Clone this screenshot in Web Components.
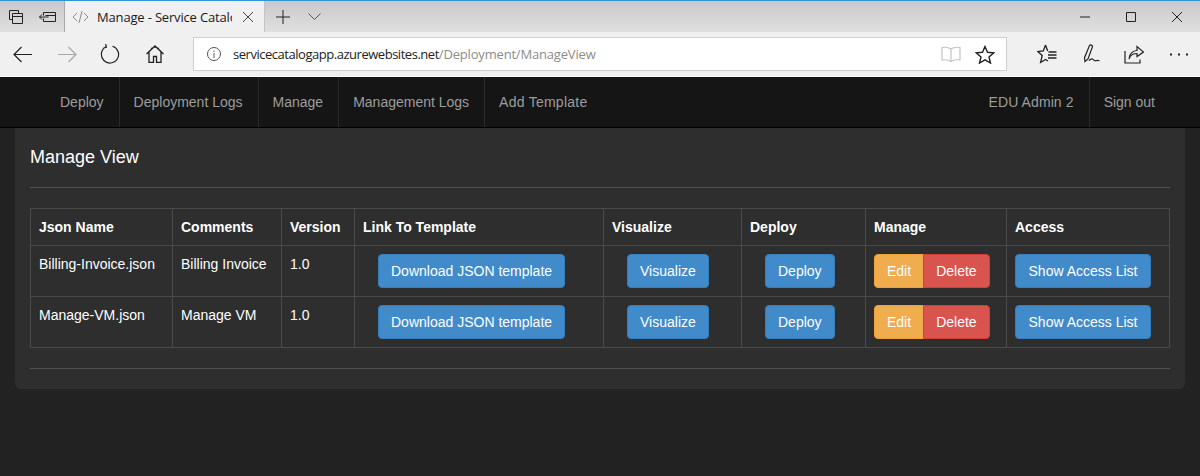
<!DOCTYPE html>
<html>
<head>
<meta charset="utf-8">
<title>Manage - Service Catalog</title>
<style>
  html, body { margin: 0; height: 476px; overflow: hidden; background: #222; }
  body { font-family: "Liberation Sans", Arial, sans-serif; display: flex; flex-direction: column; }
</style>
</head>
<body>
<browser-tabs></browser-tabs>
<browser-toolbar url-host="servicecatalogapp.azurewebsites.net" url-path="/Deployment/ManageView"></browser-toolbar>
<app-nav>
  <nav-item>Deploy</nav-item>
  <nav-item>Deployment Logs</nav-item>
  <nav-item>Manage</nav-item>
  <nav-item>Management Logs</nav-item>
  <nav-item last style="letter-spacing:.25px">Add Template</nav-item>
  <nav-item slot="right" style="letter-spacing:.1px">EDU Admin 2</nav-item>
  <nav-item slot="right" last>Sign out</nav-item>
</app-nav>
<manage-panel heading="Manage View">
  <manage-table></manage-table>
</manage-panel>

<script>
// Browser tab strip
class BrowserTabs extends HTMLElement {
  constructor() {
    super();
    this.attachShadow({ mode: 'open' });
    this.shadowRoot.innerHTML = `
<style>
  :host {
    display: flex;
    height: 32px;
    flex: none;
    box-sizing: border-box;
    border-top: 1px solid #2f93dc;
    background: linear-gradient(#c9c9c9, #e0e0e0);
    color: #1a1a1a;
    font-family: "Open Sans", sans-serif;
    font-size: 13px;
  }
  .cell { display: flex; align-items: center; justify-content: center; flex: none; }
  svg { display: block; fill: none; stroke: #222; stroke-width: 1; }
  .tab {
    width: 201px;
    box-sizing: border-box;
    background: #f0f0f0;
    border-left: 1px solid #a9a9a9;
    border-right: 1px solid #c4c4c4;
    display: flex;
    align-items: center;
    flex: none;
  }
  .title { width: 135px; overflow: hidden; white-space: nowrap; margin-left: 8px; flex: none; letter-spacing: -0.17px; }
  .spacer { flex: 1; }
</style>
<div class="cell" style="width:32px">
  <svg width="16" height="16" viewBox="0 0 16 16"><path d="M1.5 1.5h9v3M1.5 1.5v9h3M4.5 4.5h10v10h-10zM4.5 7.5h10"/></svg>
</div>
<div class="cell" style="width:32px">
  <svg width="18" height="14" viewBox="0 0 18 14"><path d="M4.5 2.5h12v9h-12v-3M4.5 2.5v3M.5 7h9M3 4.5L.5 7 3 9.5M6.5 5.5h10"/></svg>
</div>
<div class="tab">
  <svg style="margin-left:7px;stroke:#8a8a8a" width="17" height="14" viewBox="0 0 17 14"><path d="M5 3L1 7l4 4M12 3l4 4-4 4M10 1L7 13"/></svg>
  <div class="title">Manage - Service Catalog</div>
  <svg style="margin-left:11px;stroke:#444" width="10" height="10" viewBox="0 0 10 10"><path d="M0 0l10 10M10 0L0 10"/></svg>
</div>
<div class="cell" style="width:36px">
  <svg width="14" height="14" viewBox="0 0 14 14"><path d="M7 0v14M0 7h14"/></svg>
</div>
<div class="cell" style="width:26px">
  <svg width="13" height="7" viewBox="0 0 13 7"><path stroke="#555" d="M.5.5l6 6 6-6"/></svg>
</div>
<div class="spacer"></div>
<div class="cell" style="width:46px">
  <svg width="10" height="2" viewBox="0 0 10 2"><path d="M0 1h10"/></svg>
</div>
<div class="cell" style="width:46px">
  <svg width="10" height="10" viewBox="0 0 10 10"><path d="M.5.5h9v9h-9z"/></svg>
</div>
<div class="cell" style="width:46px">
  <svg width="10" height="10" viewBox="0 0 10 10"><path d="M0 0l10 10M10 0L0 10"/></svg>
</div>`;
  }
}
customElements.define('browser-tabs', BrowserTabs);

// Back / forward / address bar row
class BrowserToolbar extends HTMLElement {
  constructor() {
    super();
    this.attachShadow({ mode: 'open' });
    this.shadowRoot.innerHTML = `
<style>
  :host {
    display: flex;
    height: 45px;
    flex: none;
    align-items: flex-start;
    padding-top: 5px;
    box-sizing: border-box;
    background: #f0f0f0;
    border-bottom: 1px solid #fff;
    font-family: "Open Sans", sans-serif;
    font-size: 13px;
  }
  .btn { display: flex; align-items: center; justify-content: center; height: 34px; flex: none; }
  svg { display: block; fill: none; stroke: #222; stroke-width: 1.2; }
  .address {
    width: 814px;
    height: 34px;
    box-sizing: border-box;
    flex: none;
    background: #fff;
    border: 1px solid #cfcfcf;
    display: flex;
    align-items: center;
  }
  .host { color: #222; margin-left: 11px; letter-spacing: -0.47px; }
  .path { color: #8c8c8c; letter-spacing: -0.18px; }
  .spacer { flex: 1; }
</style>
<div class="btn" style="width:45px">
  <svg width="19" height="17" viewBox="0 0 19 17"><path d="M19 8.500H1M8.500 1L1 8.500 8.500 16"/></svg>
</div>
<div class="btn" style="width:45px">
  <svg style="stroke:#a8a8a8" width="19" height="17" viewBox="0 0 19 17"><path d="M0 8.500h18M10.500 1L18 8.500 10.500 16"/></svg>
</div>
<div class="btn" style="width:40px">
  <svg width="20" height="20" viewBox="0 0 20 20"><path d="M6 2.800a8.600 8.600 0 1 0 6.500-.6M5.500 0l1 3-3 1"/></svg>
</div>
<div class="btn" style="width:49px">
  <svg width="18" height="18" viewBox="0 0 18 18"><path stroke-width="1.300" d="M.5 9L9 1l8.500 8M3 7v10.500h4.500v-6h3v6H15V7M5 3.500l4-1.500 4 1.500"/></svg>
</div>
<div style="width:14px"></div>
<div class="address">
  <svg style="margin-left:12px;stroke:#555;stroke-width:1" width="16" height="16" viewBox="0 0 16 16"><circle cx="8" cy="8" r="6.500"/><path d="M8 7v5M8 4.500v1.500"/></svg>
  <span class="host" id="host"></span><span class="path" id="path"></span>
  <div class="spacer"></div>
  <svg style="stroke:#c4c4c4;stroke-width:1.200" width="20" height="17" viewBox="0 0 20 17"><path d="M10 3C8 1.500 4 1 1 1.500V14c3-.5 7 0 9 1.500 2-1.500 6-2 9-1.500V1.500C16 1 12 1.500 10 3zM10 3v12.500"/></svg>
  <svg style="margin:0 11px 0 14px;stroke-width:1.400" width="20" height="19" viewBox="0 0 20 19"><path d="M10 1.500l2.500 5.800 6.300.5-4.800 4.100 1.500 6.100L10 14.800l-5.500 3.200L6 11.900 1.200 7.800l6.300-.5z"/></svg>
</div>
<div style="width:30px"></div>
<div class="btn" style="width:20px">
  <svg width="20" height="20" viewBox="0 0 20 20"><path stroke-width="1.300" d="M8.500 1l2.200 6M8.500 1L6.300 7 .8 7.500l4.400 3.900L3.600 18.500l4.900-3 2.500 1.500M11.500 8h8M11 11h8.500M11 14h8.500"/></svg>
</div>
<div style="width:26px"></div>
<div class="btn" style="width:18px">
  <svg width="18" height="20" viewBox="0 0 18 20"><path d="M6.500 1.500c1-1 3-.5 3 1.200L5 15l-3 2.500-.5-3.800zM6 16.500c2-2 3-2.200 4-1.200s2 2 3 1.500 2-.5 3.500 0"/></svg>
</div>
<div style="width:23px"></div>
<div class="btn" style="width:20px">
  <svg width="20" height="19" viewBox="0 0 20 19"><path d="M1 6v12h15v-3.500M5 14c0-5 4-8.500 8-8.500V1.500L19.500 7 13 11.500V8.500C9 8.500 6 11 5 14z"/></svg>
</div>
<div style="width:26px"></div>
<div class="btn" style="width:18px">
  <svg width="18" height="3" viewBox="0 0 18 3"><path stroke-width="2" stroke-dasharray="2 6" d="M0 1.500h18"/></svg>
</div>`;
    this.shadowRoot.getElementById('host').textContent = this.getAttribute('url-host');
    this.shadowRoot.getElementById('path').textContent = this.getAttribute('url-path');
  }
}
customElements.define('browser-toolbar', BrowserToolbar);

// Site navbar
class AppNav extends HTMLElement {
  constructor() {
    super();
    this.attachShadow({ mode: 'open' });
    this.shadowRoot.innerHTML = `
<style>
  :host {
    display: flex;
    height: 51px;
    flex: none;
    box-sizing: border-box;
    padding: 0 30px 0 45px;
    background: #151515;
    border-bottom: 1px solid #000;
  }
  .left { display: flex; flex: 1; }
  .right { display: flex; }
</style>
<div class="left"><slot></slot></div>
<div class="right"><slot name="right"></slot></div>`;
  }
}
customElements.define('app-nav', AppNav);

class NavItem extends HTMLElement {
  constructor() {
    super();
    this.attachShadow({ mode: 'open' });
    this.shadowRoot.innerHTML = `
<style>
  :host {
    display: block;
    padding: 15px;
    line-height: 20px;
    font-size: 14px;
    color: #9d9d9d;
    box-shadow: 1px 0 0 #2a2a2a;
  }
  :host([last]) { box-shadow: none; }
</style>
<slot></slot>`;
  }
}
customElements.define('nav-item', NavItem);

// Page panel with heading and two rules
class ManagePanel extends HTMLElement {
  constructor() {
    super();
    this.attachShadow({ mode: 'open' });
    this.shadowRoot.innerHTML = `
<style>
  :host {
    display: block;
    margin: 0 15px;
    padding: 0 15px;
    height: 261px;
    box-sizing: border-box;
    background: #2e2e2e;
    border-radius: 0 0 6px 6px;
  }
  h2 {
    margin: 0;
    padding-top: 19px;
    font-size: 18px;
    font-weight: 400;
    line-height: 20px;
    color: #fff;
  }
  hr { border: 0; border-top: 1px solid #4f4f4f; margin: 20px 0; }
</style>
<h2></h2>
<hr>
<slot></slot>
<hr>`;
    this.shadowRoot.querySelector('h2').textContent = this.getAttribute('heading');
  }
}
customElements.define('manage-panel', ManagePanel);

class UiBtn extends HTMLElement {
  constructor() {
    super();
    this.attachShadow({ mode: 'open' });
    this.shadowRoot.innerHTML = `
<style>
  :host {
    display: inline-block;
    box-sizing: border-box;
    height: 34px;
    padding: 6px 12px;
    line-height: 20px;
    font-size: 14px;
    color: #fff;
    white-space: nowrap;
    background: #428bca;
    border: 1px solid #357ebd;
    border-radius: 4px;
    vertical-align: top;
    text-align: center;
  }
  :host([kind="warning"]) { background: #f0ad4e; border-color: #eea236; border-radius: 4px 0 0 4px; }
  :host([kind="danger"]) { background: #d9534f; border-color: #d43f3a; border-radius: 0 4px 4px 0; margin-left: -1px; }
  :host([indent]) { margin-left: 15px; }
</style>
<slot></slot>`;
  }
}
customElements.define('ui-btn', UiBtn);

// Templates table, filled from rows
const manageRows = [
  ['Billing-Invoice.json', 'Billing Invoice', '1.0'],
  ['Manage-VM.json', 'Manage VM', '1.0']
];
const manageCols = [143, 109, 73, 249, 138, 124, 141, 163];
const manageHeads = ['Json Name', 'Comments', 'Version', 'Link To Template', 'Visualize', 'Deploy', 'Manage', 'Access'];

class ManageTable extends HTMLElement {
  constructor() {
    super();
    this.attachShadow({ mode: 'open' });
    const cols = manageCols.map(w => `<col style="width:${w}px">`).join('');
    const heads = manageHeads.map(h => `<th>${h}</th>`).join('');
    const rows = manageRows.map(r => `
      <tr>
        ${r.map(t => `<td>${t}</td>`).join('')}
        <td><ui-btn indent>Download JSON template</ui-btn></td>
        <td><ui-btn indent>Visualize</ui-btn></td>
        <td><ui-btn indent>Deploy</ui-btn></td>
        <td><ui-btn kind="warning">Edit</ui-btn><ui-btn kind="danger">Delete</ui-btn></td>
        <td><ui-btn style="width:136px">Show Access List</ui-btn></td>
      </tr>`).join('');
    this.shadowRoot.innerHTML = `
<style>
  :host { display: block; }
  table {
    width: 1140px;
    table-layout: fixed;
    border-collapse: separate;
    border-spacing: 0;
    font-size: 14px;
    line-height: 20px;
    color: #fff;
  }
  th, td {
    border-right: 1px solid #4a4a4a;
    border-bottom: 1px solid #4a4a4a;
    padding: 8px;
    text-align: left;
    vertical-align: top;
  }
  th { font-weight: 700; border-top: 1px solid #4a4a4a; }
  th:first-child, td:first-child { border-left: 1px solid #4a4a4a; }
</style>
<table>
  <colgroup>${cols}</colgroup>
  <thead><tr>${heads}</tr></thead>
  <tbody>${rows}</tbody>
</table>`;
  }
}
customElements.define('manage-table', ManageTable);
</script>
</body>
</html>
